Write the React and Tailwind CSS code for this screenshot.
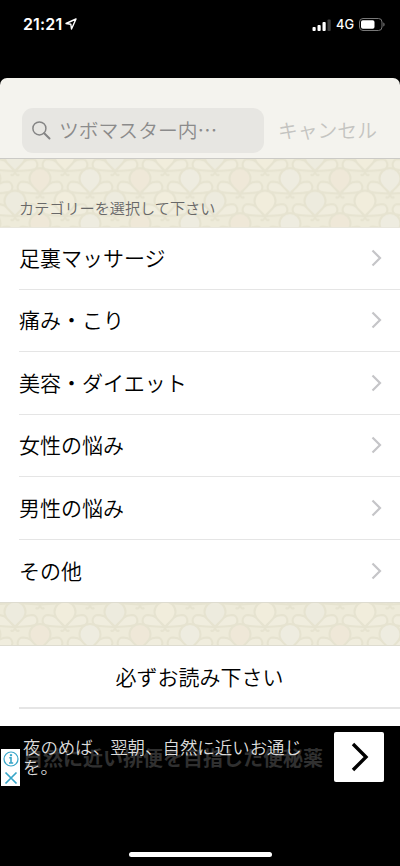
import React from 'react';

const categories = [
    '足裏マッサージ',
    '痛み・こり',
    '美容・ダイエット',
    '女性の悩み',
    '男性の悩み',
    'その他',
];

// One flower: a round bud with a leaf on each side and a small curl below
const Flower = ({ x, y, fill }) => (
    <g transform={`translate(${x} ${y})`} stroke="#e6e3d0" strokeWidth="2" strokeLinejoin="round">
        <path d="M-1 15C-5 7-11 3-17 3A5.5 5.5 0 0 0-20 13C-14 15-7 14-1 15Z" fill="#f0edde" />
        <path d="M1 15C5 7 11 3 17 3A5.5 5.5 0 0 1 20 13C14 15 7 14 1 15Z" fill="#f0edde" />
        <path d="M0 15C-3 10-10.5 8-10.5 0A10.5 10.5 0 0 1 10.5 0C10.5 8 3 10 0 15Z" fill={fill} />
        <path d="M0 14V17M0 16C-1 19-3 20-4 18M0 16C1 19 3 20 4 18" fill="none" />
    </g>
);

const rows = [
    { y: -22.5, xs: [-10, 40, 90, 140], fills: ['#eeece0', '#efe8d8'] },
    { y: 0, xs: [-35, 15, 65, 115], fills: ['#f1eddc', '#edebde'] },
    { y: 22.5, xs: [-10, 40, 90, 140], fills: ['#eeece0', '#efe8d8'] },
    { y: 45, xs: [-35, 15, 65, 115], fills: ['#f1eddc', '#edebde'] },
];

const FlowerBand = ({ id, offset, className }) => (
    <svg className={className} width="100%" height="100%" aria-hidden="true">
        <defs>
            <pattern id={id} width="100" height="45" y={offset} patternUnits="userSpaceOnUse">
                <rect width="100" height="45" fill="#eeebda" />
                {rows.map((row) => (
                    <g key={row.y}>
                        <path d={`M0 ${row.y + 14}H100`} stroke="#e9e6d3" />
                        {row.xs.map((x, i) => (
                            <Flower key={x} x={x} y={row.y} fill={row.fills[i % 2]} />
                        ))}
                    </g>
                ))}
            </pattern>
        </defs>
        <rect width="100%" height="100%" fill={`url(#${id})`} />
    </svg>
);

const StatusBar = () => (
    <div className="flex h-[78px] shrink-0 items-start justify-between pt-[13px] pr-[15px] pl-[23px] font-['Inter','Liberation_Sans',sans-serif] text-white">
        <div className="flex items-center">
            <span className="text-[16px] leading-[22px] font-semibold tracking-[0.15px]">21:21</span>
            <svg className="ml-[3px]" width="12" height="12" viewBox="0 0 12 12" fill="none" stroke="white" strokeWidth="1.4" strokeLinejoin="round">
                <path d="M11 1L1 5.5L5.8 6.2L6.5 11Z" />
            </svg>
        </div>
        <div className="flex items-center">
            <svg width="19" height="12" viewBox="0 0 19 12">
                <rect x="0.5" y="8" width="3.2" height="4" rx="0.9" fill="white" />
                <rect x="5.5" y="6" width="3.2" height="6" rx="0.9" fill="white" />
                <rect x="10.5" y="3" width="3.2" height="9" rx="0.9" fill="white" />
                <rect x="15.5" y="0.5" width="3.2" height="11.5" rx="0.9" fill="#3d3d3d" />
            </svg>
            <span className="ml-[5px] pt-px text-[12.8px] leading-[22px] font-medium">4G</span>
            <svg className="ml-[5px]" width="26" height="13" viewBox="0 0 26 13">
                <rect x="0.5" y="0.5" width="22.5" height="12" rx="3.5" fill="none" stroke="#777" />
                <rect x="2" y="2.3" width="13.5" height="8.4" rx="1.8" fill="white" />
                <path d="M24.3 4.5C26 5 26 8 24.3 8.5Z" fill="#777" />
            </svg>
        </div>
    </div>
);

const SearchHeader = () => (
    <header className="flex h-[81px] shrink-0 items-start rounded-t-[7px] border-b border-[#cbcac6] bg-[#f4f3ee] pt-[30px] pl-[22px]">
        <div className="flex h-[45px] w-[242px] items-center rounded-[11px] bg-[#e7e6e2] pl-[10px] text-[#8b8b8b]">
            <svg width="19" height="19" viewBox="0 0 19 19" fill="none" stroke="#858585" strokeWidth="1.5" strokeLinecap="round">
                <circle cx="7.4" cy="7.4" r="6.5" />
                <path d="M12.2 12.2L17.5 17.5" strokeWidth="2" />
            </svg>
            <span className="ml-[8px] pb-px text-[19.8px] leading-none font-[350]">ツボマスター内…</span>
        </div>
        <button className="ml-[14px] h-[45px] pb-px text-[19.8px] leading-none font-[350] text-[#c4c4c1]">キャンセル</button>
    </header>
);

const CategoryRow = ({ label, last }) => (
    <li className="flex h-[62.5px] items-stretch pl-[19px]">
        <div className={`flex flex-1 items-center justify-between pr-[18px] ${last ? '' : 'border-b border-[#e5e5e5]'}`}>
            <span className="pb-px text-[21px] leading-none font-[350]">{label}</span>
            <svg width="11" height="18" viewBox="0 0 11 18" fill="none" stroke="#c5c5c8" strokeWidth="2.2">
                <path d="M1.5 1.5L9 9L1.5 16.5" />
            </svg>
        </div>
    </li>
);

const AdBanner = () => (
    <div className="relative h-[60px] overflow-hidden bg-black">
        <p className="absolute top-[21px] left-[23px] text-[20px] leading-[22px] font-bold whitespace-nowrap text-[#303030]">
            自然に近い排便を目指した便秘薬
        </p>
        <div className="relative flex items-start">
            <div className="mt-[23px] ml-px flex h-[38px] w-[19px] flex-col items-center justify-around bg-white">
                <svg width="16" height="16" viewBox="0 0 16 16" fill="none" stroke="#36a5c8" strokeWidth="1.2">
                    <circle cx="8" cy="8" r="7" />
                    <path d="M6.3 6.8H8V12M6 12H10.2" strokeWidth="1.6" />
                    <path d="M8 3.2V5.2" strokeWidth="2.2" />
                </svg>
                <svg width="14" height="14" viewBox="0 0 14 14" fill="none" stroke="#36a5c8" strokeWidth="1.7">
                    <path d="M1.5 1.5L12.5 12.5M12.5 1.5L1.5 12.5" />
                </svg>
            </div>
            <p className="mt-[11px] ml-[3px] w-[285px] text-[17.45px] leading-[20px] font-[350] text-[#dcdcdc]">
                夜のめば、翌朝、自然に近いお通じを。
            </p>
            <div className="mt-[6px] ml-[26px] flex h-[50px] w-[50px] items-center justify-center rounded-[2px] bg-white pl-px">
                <svg width="18" height="30" viewBox="0 0 18 30" fill="none" stroke="black" strokeWidth="3.4">
                    <path d="M2 2L15 15L2 28" />
                </svg>
            </div>
        </div>
    </div>
);

const App = () => {
    return (
        <div className="flex h-[866px] w-[400px] flex-col overflow-hidden bg-black font-['Noto_Sans_CJK_JP',sans-serif] text-black">
            <StatusBar />
            <SearchHeader />

            <main className="h-[567px] shrink-0 overflow-hidden bg-white">
                <div className="relative h-[69px] border-b border-[#e8e6dc]">
                    <FlowerBand id="band-top" offset={-2.8} className="absolute inset-0" />
                    <h2 className="relative pt-[37px] pl-[19px] text-[15.15px] leading-[22px] font-[350] text-[#686868]">
                        カテゴリーを選択して下さい
                    </h2>
                </div>

                <ul className="-mt-px">
                    {categories.map((label, i) => (
                        <CategoryRow key={label} label={label} last={i === categories.length - 1} />
                    ))}
                </ul>

                <div className="h-[44px] border-y border-[#dedcd0]">
                    <FlowerBand id="band-bottom" offset={9} className="block" />
                </div>

                <div className="pl-[19px]">
                    <div className="flex h-[63px] items-center justify-center border-b-2 border-[#e5e5e5] pr-[20px] pb-px text-[21px] leading-none font-[350]">
                        必ずお読み下さい
                    </div>
                </div>
            </main>

            <AdBanner />

            <div className="mt-auto mb-[9px] h-[5px] w-[143px] shrink-0 self-center rounded-full bg-white" />
        </div>
    );
};

export default App;
